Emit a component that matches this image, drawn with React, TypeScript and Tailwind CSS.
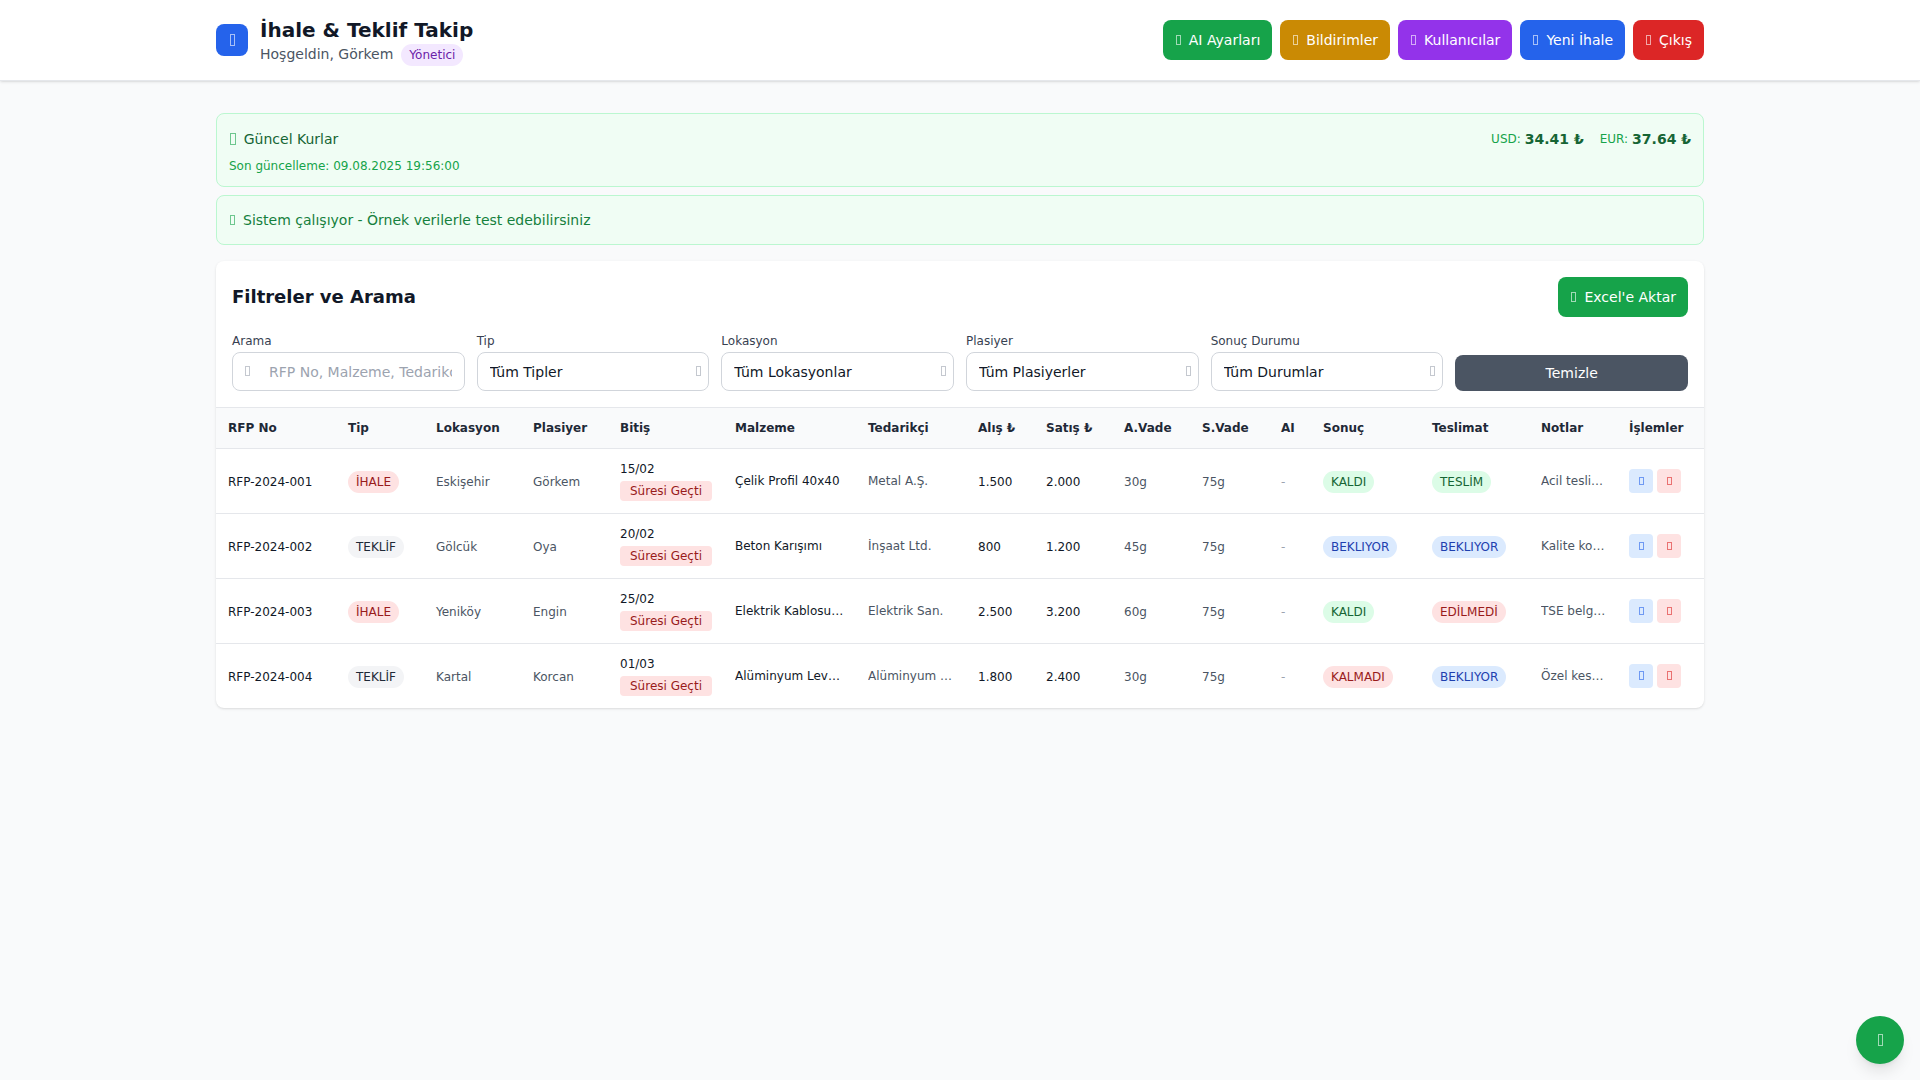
const BADGE: Record<string, string> = {
  red: "bg-[#fee2e2] text-[#991b1b]",
  gray: "bg-[#f3f4f6] text-[#1f2937]",
  green: "bg-[#dcfce7] text-[#166534]",
  blue: "bg-[#dbeafe] text-[#1e40af]",
};

const rows = [
  { no: "RFP-2024-001", tip: "İHALE", tipC: "red", lok: "Eskişehir", pla: "Görkem", bit: "15/02", mal: "Çelik Profil 40x40", ted: "Metal A.Ş.", al: "1.500", sat: "2.000", av: "30g", son: "KALDI", sonC: "green", tes: "TESLİM", tesC: "green", not: "Acil teslimat gerekli" },
  { no: "RFP-2024-002", tip: "TEKLİF", tipC: "gray", lok: "Gölcük", pla: "Oya", bit: "20/02", mal: "Beton Karışımı", ted: "İnşaat Ltd.", al: "800", sat: "1.200", av: "45g", son: "BEKLIYOR", sonC: "blue", tes: "BEKLIYOR", tesC: "blue", not: "Kalite kontrol gerekli" },
  { no: "RFP-2024-003", tip: "İHALE", tipC: "red", lok: "Yeniköy", pla: "Engin", bit: "25/02", mal: "Elektrik Kablosu 3x2.5", ted: "Elektrik San.", al: "2.500", sat: "3.200", av: "60g", son: "KALDI", sonC: "green", tes: "EDİLMEDİ", tesC: "red", not: "TSE belgesi gerekli" },
  { no: "RFP-2024-004", tip: "TEKLİF", tipC: "gray", lok: "Kartal", pla: "Korcan", bit: "01/03", mal: "Alüminyum Levha 2mm", ted: "Alüminyum Sanayi", al: "1.800", sat: "2.400", av: "30g", son: "KALMADI", sonC: "red", tes: "BEKLIYOR", tesC: "blue", not: "Özel kesim gerekli" },
];

const selects = [
  ["Tip", "Tüm Tipler"],
  ["Lokasyon", "Tüm Lokasyonlar"],
  ["Plasiyer", "Tüm Plasiyerler"],
  ["Sonuç Durumu", "Tüm Durumlar"],
];

const navButtons = [
  ["AI Ayarları", "bg-[#16a34a]"],
  ["Bildirimler", "bg-[#ca8a04]"],
  ["Kullanıcılar", "bg-[#9333ea]"],
  ["Yeni İhale", "bg-[#2563eb]"],
  ["Çıkış", "bg-[#dc2626]"],
];

const headers = [
  ["RFP No", "w-[120px]"],
  ["Tip", "w-[88px]"],
  ["Lokasyon", "w-[97px]"],
  ["Plasiyer", "w-[87px]"],
  ["Bitiş", "w-[115px]"],
  ["Malzeme", "w-[133px]"],
  ["Tedarikçi", "w-[110px]"],
  ["Alış ₺", "w-[68px]"],
  ["Satış ₺", "w-[78px]"],
  ["A.Vade", "w-[78px]"],
  ["S.Vade", "w-[79px]"],
  ["AI", "w-[42px]"],
  ["Sonuç", "w-[109px]"],
  ["Teslimat", "w-[109px]"],
  ["Notlar", "w-[88px]"],
  ["İşlemler", "w-[87px]"],
];

// the icon font never loaded in the original, so every icon is an empty box
function Ic({ className = "" }: { className?: string }) {
  return <span className={`ml-px inline-block h-[0.72em] w-[0.36em] shrink-0 border border-current opacity-60 ${className}`} />;
}

function Badge({ color, children }: { color: string; children: React.ReactNode }) {
  return <span className={`inline-block rounded-full px-2 py-[3px] text-xs leading-4 ${BADGE[color]}`}>{children}</span>;
}

export default function App() {
  return (
    <div className="min-h-screen bg-[#f9fafb] font-['DejaVu_Sans',sans-serif] text-[#111827]">
      {/* Header */}
      <header className="h-[81px] border-b border-[#e5e7eb] bg-white shadow-sm">
        <div className="mx-auto flex h-20 max-w-[1536px] items-center justify-between px-6">
          <div className="flex items-center gap-3">
            <div className="flex h-8 w-8 items-center justify-center rounded-lg bg-[#2563eb] text-white">
              <Ic />
            </div>
            <div className="pt-0.5">
              <h1 className="text-xl leading-7 font-bold text-[#111827]">İhale & Teklif Takip</h1>
              <div className="flex items-center gap-2 text-sm text-[#4b5563]">
                <span className="-mt-0.5">Hoşgeldin, Görkem</span>
                <span className="rounded-full bg-[#f3e8ff] px-2 py-[3px] text-xs leading-4 text-[#6b21a8]">Yönetici</span>
              </div>
            </div>
          </div>
          <div className="flex items-center gap-2">
            {navButtons.map(([label, bg]) => (
              <button key={label} className={`flex h-10 items-center gap-2 rounded-lg px-3 text-sm text-white ${bg}`}>
                <Ic />
                {label}
              </button>
            ))}
          </div>
        </div>
      </header>

      <main className="mx-auto max-w-[1536px] px-6 pt-8">
        {/* Kurlar */}
        <div className="mb-2 rounded-lg border border-[#bbf7d0] bg-[#f0fdf4] p-3">
          <div className="mb-2 flex h-6 items-center justify-between pt-0.5">
            <div className="flex items-center gap-2 text-sm text-[#166534]">
              <Ic className="text-base text-[#16a34a]" />
              Güncel Kurlar
            </div>
            <div className="flex items-center gap-4">
              <div className="flex items-center gap-1">
                <span className="text-xs text-[#16a34a]">USD:</span>
                <span className="text-sm font-bold text-[#166534]">34.41 ₺</span>
              </div>
              <div className="flex items-center gap-1">
                <span className="text-xs text-[#16a34a]">EUR:</span>
                <span className="text-sm font-bold text-[#166534]">37.64 ₺</span>
              </div>
            </div>
          </div>
          <p className="text-xs text-[#16a34a]">Son güncelleme: 09.08.2025 19:56:00</p>
        </div>

        <div className="mb-4 flex h-[50px] items-center gap-2 rounded-lg border border-[#bbf7d0] bg-[#f0fdf4] px-3 text-sm text-[#15803d]">
          <Ic className="text-[#16a34a]" />
          Sistem çalışıyor - Örnek verilerle test edebilirsiniz
        </div>

        {/* Filtreler + tablo */}
        <div className="overflow-hidden rounded-lg bg-white shadow-sm">
          <div className="p-4">
            <div className="mb-4 flex items-center justify-between">
              <h2 className="text-lg font-bold text-[#111827]">Filtreler ve Arama</h2>
              <button className="flex h-10 items-center gap-2 rounded-lg bg-[#16a34a] px-3 text-sm text-white">
                <Ic />
                Excel'e Aktar
              </button>
            </div>
            <div className="grid grid-cols-6 items-end gap-3">
              <div>
                <label className="mb-[3px] block text-xs text-[#374151]">Arama</label>
                <div className="relative">
                  <Ic className="absolute top-[14px] left-3 text-sm text-[#9ca3af]" />
                  <input
                    placeholder="RFP No, Malzeme, Tedarikçi..."
                    className="h-[39px] w-full rounded-lg border border-[#d1d5db] bg-white pr-3 pl-9 text-sm text-[#111827] placeholder:text-[#9ca3af]"
                  />
                </div>
              </div>
              {selects.map(([label, value]) => (
                <div key={label}>
                  <label className="mb-[3px] block text-xs text-[#374151]">{label}</label>
                  <div className="relative">
                    <select className="h-[39px] w-full appearance-none rounded-lg border border-[#d1d5db] bg-white px-3 text-sm text-[#111827]">
                      <option>{value}</option>
                    </select>
                    <Ic className="absolute top-[14px] right-2 text-sm text-[#9ca3af]" />
                  </div>
                </div>
              ))}
              <button className="h-9 rounded-lg bg-[#4b5563] text-sm text-white">Temizle</button>
            </div>
          </div>

          <table className="w-full table-fixed border-collapse text-left text-xs">
            <thead className="bg-[#f9fafb]">
              <tr className="h-[41px] border-y border-[#e5e7eb]">
                {headers.map(([label, w]) => (
                  <th key={label} className={`px-3 font-bold text-[#1f2937] ${w}`}>{label}</th>
                ))}
              </tr>
            </thead>
            <tbody>
              {rows.map((r) => (
                <tr key={r.no} className="h-[65px] border-b border-[#e5e7eb] last:h-16 last:border-b-0">
                  <td className="px-3 pt-0.5 text-[#111827]">{r.no}</td>
                  <td className="px-3 pt-0.5"><Badge color={r.tipC}>{r.tip}</Badge></td>
                  <td className="px-3 pt-0.5 text-[#4b5563]">{r.lok}</td>
                  <td className="px-3 pt-0.5 text-[#4b5563]">{r.pla}</td>
                  <td className="px-3 text-[#111827]">
                    <div>{r.bit}</div>
                    <span className="mt-1 inline-block rounded bg-[#fee2e2] px-2.5 py-0.5 whitespace-nowrap text-[#991b1b]">Süresi Geçti</span>
                  </td>
                  <td className="px-3 text-[#111827]"><div className="truncate">{r.mal}</div></td>
                  <td className="px-3 text-[#4b5563]"><div className="truncate">{r.ted}</div></td>
                  <td className="px-3 pt-0.5 text-[#111827]">{r.al}</td>
                  <td className="px-3 pt-0.5 text-[#111827]">{r.sat}</td>
                  <td className="px-3 pt-0.5 text-[#4b5563]">{r.av}</td>
                  <td className="px-3 pt-0.5 text-[#4b5563]">75g</td>
                  <td className="px-3 pt-0.5 text-[#9ca3af]">-</td>
                  <td className="px-3 pt-0.5"><Badge color={r.sonC}>{r.son}</Badge></td>
                  <td className="px-3 pt-0.5"><Badge color={r.tesC}>{r.tes}</Badge></td>
                  <td className="px-3 text-[#4b5563]"><div className="w-[65px] truncate">{r.not}</div></td>
                  <td className="px-3">
                    <div className="flex gap-1">
                      <button className="flex h-6 w-6 items-center justify-center rounded bg-[#dbeafe] text-xs text-[#2563eb]"><Ic /></button>
                      <button className="flex h-6 w-6 items-center justify-center rounded bg-[#fee2e2] text-xs text-[#dc2626]"><Ic /></button>
                    </div>
                  </td>
                </tr>
              ))}
            </tbody>
          </table>
        </div>
      </main>

      <button className="fixed right-4 bottom-4 flex h-12 w-12 items-center justify-center rounded-full bg-[#16a34a] text-white shadow-lg">
        <Ic />
      </button>
    </div>
  );
}
